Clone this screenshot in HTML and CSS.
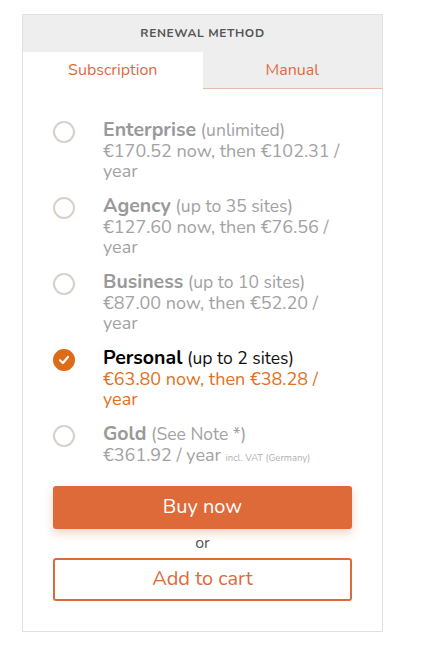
FILE: index.html
```html
<!DOCTYPE html>
<html>
<head>
<meta charset="utf-8">
<link rel="stylesheet" href="styles.css">
</head>
<body>
<div class="card">
  <div class="header">RENEWAL METHOD</div>
  <div class="tabs">
    <div class="tab active">Subscription</div>
    <div class="tab">Manual</div>
  </div>
  <div class="options">
    <div class="option">
      <span class="radio"></span>
      <div class="info">
        <div class="name"><b>Enterprise</b> (unlimited)</div>
        <div class="price">€170.52 now, then €102.31 / year</div>
      </div>
    </div>
    <div class="option">
      <span class="radio"></span>
      <div class="info">
        <div class="name"><b>Agency</b> (up to 35 sites)</div>
        <div class="price">€127.60 now, then €76.56 / year</div>
      </div>
    </div>
    <div class="option">
      <span class="radio"></span>
      <div class="info">
        <div class="name"><b>Business</b> (up to 10 sites)</div>
        <div class="price">€87.00 now, then €52.20 / year</div>
      </div>
    </div>
    <div class="option selected">
      <span class="radio checked"><svg width="12" height="12" viewBox="0 0 12 12"><path d="M2 6.3 L4.9 9 L10 3" fill="none" stroke="#fff" stroke-width="2.2" stroke-linecap="round" stroke-linejoin="round"/></svg></span>
      <div class="info">
        <div class="name"><b>Personal</b> (up to 2 sites)</div>
        <div class="price">€63.80 now, then €38.28 / year</div>
      </div>
    </div>
    <div class="option">
      <span class="radio"></span>
      <div class="info">
        <div class="name"><b>Gold</b> (See Note *)</div>
        <div class="price">€361.92 / year <span class="vat">incl. VAT (Germany)</span></div>
      </div>
    </div>
  </div>
  <div class="actions">
    <button class="btn buy">Buy now</button>
    <div class="or">or</div>
    <button class="btn cart">Add to cart</button>
  </div>
</div>
</body>
</html>
```
FILE: styles.css
```css
html, body {
  margin: 0;
  padding: 0;
  background: #fff;
}
body {
  font-family: "Nunito", "Lato", "Open Sans", sans-serif;
  padding: 14px 0 0 22px;
}
.card {
  width: 359px;
  height: 616px;
  border: 1px solid #e1e1e1;
  box-sizing: content-box;
}
.header {
  background: #eeeeee;
  height: 37px;
  display: flex;
  align-items: center;
  justify-content: center;
  font-size: 12px;
  font-weight: 700;
  letter-spacing: 0.6px;
  color: #555;
  padding-bottom: 1px;
  box-sizing: border-box;
}
.tabs {
  display: flex;
  height: 37px;
}
.tab {
  flex: 1;
  display: flex;
  align-items: center;
  justify-content: center;
  font-size: 16px;
  color: #dd6b3e;
  background: #eeeeee;
  border-bottom: 1px solid #eab9a6;
  box-sizing: border-box;
}
.tab.active {
  background: #fff;
  border-bottom: none;
  padding-bottom: 1px;
}
.options {
  padding: 30px 0 0 30px;
  display: flex;
  flex-direction: column;
  gap: 15px;
}
.option {
  display: flex;
  align-items: flex-start;
  gap: 28px;
  height: 61px;
}
.option:last-child {
  height: 41px;
}
.radio {
  width: 22px;
  height: 22px;
  border: 2.5px solid #d8d0ca;
  border-radius: 50%;
  box-sizing: border-box;
  margin-top: 2px;
  flex: none;
  display: flex;
  align-items: center;
  justify-content: center;
}
.radio.checked {
  background: #dd6b17;
  border-color: #dd6b17;
}
.info {
  width: 248px;
  color: #a2a2a2;
}
.name {
  font-size: 17.5px;
  line-height: 21px;
}
.name b {
  font-size: 19.5px;
  color: #999;
}
.price {
  font-size: 18px;
  line-height: 20px;
}
.selected .name {
  color: #111;
}
.selected .name b {
  color: #000;
}
.selected .price {
  color: #e07022;
}
.vat {
  font-size: 9.5px;
  color: #b0b0b0;
}
.actions {
  padding: 22px 30px 0 30px;
  display: flex;
  flex-direction: column;
  align-items: stretch;
}
.btn {
  font-family: inherit;
  height: 43px;
  border-radius: 3px;
  font-size: 20px;
  cursor: pointer;
  padding: 0 0 2px 0;
}
.buy {
  background: #de6a39;
  color: #fff;
  border: none;
  box-shadow: 0 4px 10px rgba(222, 106, 57, 0.3);
}
.or {
  text-align: center;
  color: #555;
  font-size: 16px;
  height: 29px;
  line-height: 29px;
}
.cart {
  background: #fff;
  color: #de6a39;
  border: 2px solid #de6a39;
}
```
